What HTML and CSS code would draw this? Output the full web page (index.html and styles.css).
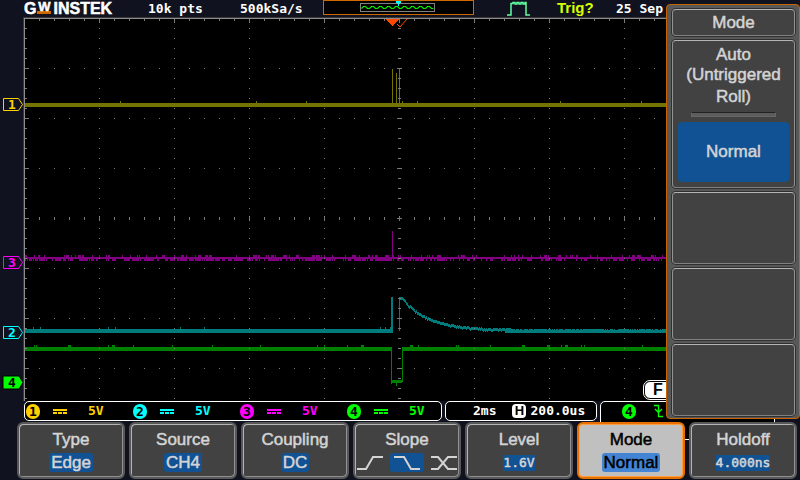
FILE: index.html
```
<!DOCTYPE html>
<html lang="en">
<head>
<meta charset="utf-8">
<title>GW Instek oscilloscope</title>
<link rel="stylesheet" href="styles.css">
</head>
<body>
<header class="topbar">
  <div class="logo"><span>G</span><span class="logo-w">W</span><span>INSTEK</span></div>
  <span class="mono">10k pts</span>
  <span class="mono">500kSa/s</span>
  <svg class="record" width="151" height="16" viewBox="0 0 151 16" aria-hidden="true">
    <rect x=".5" y=".5" width="150" height="14" fill="#000" stroke="#cf6800"/>
    <rect x="37.5" y="3.5" width="74" height="8" fill="none" stroke="#808080"/>
    <path d="M38.500 8.500l2-2h2l2 2h2l2-2h2l2 2h2l2-2h2l2 2h2l2-2h2l2 2h2l2-2h2l2 2h2l2-2h2l2 2h2l2-2h2l2 2h2l2-2h2l2 2h2l2-2h2l2 2h2" fill="none" stroke="#00f000" stroke-width="1.2"/>
    <path d="M73 1h5v2h-1v1h-1v2h-1v-2h-1v-1h-1z" fill="#0ff"/>
  </svg>
  <svg width="24" height="16" viewBox="0 0 24 16" aria-hidden="true">
    <path d="M0 15h4V3.500h2V2.500h2v1.500h2V2.500h2v1.500h2V2.500h2v1.500h2V2.500h1V15h4" fill="none" stroke="#60ffa0" stroke-width="1.500"/>
  </svg>
  <span class="trig">Trig?</span>
  <span class="mono">25 Sep</span>
</header>

<main class="scope">
  <svg class="gutter" width="23" height="384" viewBox="0 17 23 384">
    <g fill="none">
      <path d="M3.500 98.500h15l4 6l-4 6h-15z" stroke="#ffd000"/>
      <path d="M3.500 256.500h15l4 6l-4 6h-15z" stroke="#f0f"/>
      <path d="M3.500 326.500h15l4 6l-4 6h-15z" stroke="#0ff"/>
      <path d="M3 376h16l4 6.500l-4 6.500h-16z" stroke="#000" fill="#0f0"/>
    </g>
    <g class="marker-text">
      <text x="12" y="109" fill="#ffd000">1</text>
      <text x="12" y="267" fill="#f0f">3</text>
      <text x="12" y="337" fill="#0ff">2</text>
      <text x="12" y="387" fill="#000">4</text>
    </g>
  </svg>
  <div class="screen">
    <svg class="plot" viewBox="25 19 775 382" preserveAspectRatio="xMinYMin slice" shape-rendering="crispEdges" aria-label="Waveforms">
      <path id="ch1" fill="#747400"/>
      <path id="ch3" fill="#820082"/>
      <path id="ch2" fill="#007c7c"/>
      <path id="ch4" fill="#008000"/>
      <path id="grid" fill="#7b7b7b"/>
      <path d="M386 19h13l-6.500 7z" fill="#ff4800"/>
      <path d="M397 24l3 3l7-8" fill="none" stroke="#ff4800" shape-rendering="auto"/>
    </svg>
    <span class="force">F</span>
  </div>
</main>

<section class="status">
  <div class="pill channels">
    <div class="channel yellow"><b class="dot">1</b><i class="dc"></i><span class="mono">5V</span></div>
    <div class="channel cyan"><b class="dot">2</b><i class="dc"></i><span class="mono">5V</span></div>
    <div class="channel magenta"><b class="dot">3</b><i class="dc"></i><span class="mono">5V</span></div>
    <div class="channel green"><b class="dot">4</b><i class="dc"></i><span class="mono">5V</span></div>
  </div>
  <div class="pill timebase">
    <span class="mono">2ms</span><b class="h-badge">H</b><span class="mono">200.0us</span>
  </div>
  <div class="pill trigger green">
    <b class="dot">4</b>
    <svg width="10" height="14" viewBox="0 0 10 14" aria-hidden="true"><path d="M0 1.500h4.500v11H9M1 5l3.500 3.500L8 5" fill="none" stroke="#0f0" stroke-width="1.300"/></svg>
  </div>
</section>

<nav class="softkeys">
  <button class="key"><span>Type</span><span class="value">Edge</span></button>
  <button class="key"><span>Source</span><span class="value">CH4</span></button>
  <button class="key"><span>Coupling</span><span class="value">DC</span></button>
  <button class="key"><span>Slope</span>
    <span class="slopes">
      <svg width="28" height="19" viewBox="0 0 28 19"><path d="M1 16h9l7-12h10"/></svg>
      <svg class="chosen" width="34" height="19" viewBox="0 0 34 19"><path d="M4 4h10l7 12h9"/></svg>
      <svg width="28" height="19" viewBox="0 0 28 19"><path d="M1 4h7l10 12h9M1 16h7l10-12h9"/></svg>
    </span>
  </button>
  <button class="key"><span>Level</span><span class="value number mono">1.6V</span></button>
  <button class="key active"><span>Mode</span><span class="value">Normal</span></button>
  <button class="key"><span>Holdoff</span><span class="value number mono">4.000ns</span></button>
</nav>

<aside class="panel">
  <h2 class="tile title">Mode</h2>
  <div class="tile modes">
    <button class="mode">Auto<br>(Untriggered<span class="roll">Roll)</span></button>
    <hr>
    <button class="mode selected">Normal</button>
  </div>
  <button class="tile" aria-label="Unused key"></button>
  <button class="tile" aria-label="Unused key"></button>
  <button class="tile" aria-label="Unused key"></button>
</aside>
<script src="scope.js"></script>
</body>
</html>
```
FILE: styles.css
```
* { box-sizing: border-box; }

body {
  margin: 0;
  min-height: 100vh;
  display: flex;
  flex-direction: column;
  position: relative;
  overflow: hidden;
  background: #10131f;
  color: #fff;
  font-family: "Liberation Sans", Arial, sans-serif;
}

button {
  margin: 0;
  padding: 0;
  border: 0;
  background: none;
  color: inherit;
  font: inherit;
}

.mono {
  font: bold 13px/16px "DejaVu Sans Mono", monospace;
  white-space: pre;
}

.yellow { color: #ffd000; }
.cyan { color: #0ff; }
.magenta { color: #f0f; }
.green { color: #0f0; }

.topbar {
  display: grid;
  grid-template-columns: 124px 92px 83px 184px 50px 59px 1fr;
  height: 17px;
  padding-left: 24px;
}

.topbar .mono { line-height: 18px; }

.logo {
  display: flex;
  font: bold 16px/17px "Liberation Sans", Arial, sans-serif;
  -webkit-text-stroke: 0.5px;
}

.logo-w {
  width: 14px;
  height: 14px;
  margin: 0 2px 0 1px;
  border-bottom: 3px solid #cf6800;
  font-size: 13px;
  line-height: 13px;
  text-align: center;
}

.trig {
  color: #d8ff00;
  font: bold 15px/16px "Liberation Sans", Arial, sans-serif;
}

.scope {
  flex: 1;
  display: flex;
}

.marker-text {
  font: bold 13px "DejaVu Sans Mono", monospace;
  text-anchor: middle;
}

.screen {
  flex: 1;
  position: relative;
  background: #000;
  border-top: 2px groove #8c8c8c;
  border-left: 2px groove #8c8c8c;
}

.plot {
  display: block;
  width: 100%;
}

.force {
  position: absolute;
  right: 122px;
  bottom: 2px;
  width: 34px;
  height: 18px;
  padding-left: 8px;
  border: 1px solid #000;
  border-radius: 6px;
  outline: 1px solid #fff;
  background: #fff;
  color: #000;
  font: bold 16px/16px "Liberation Sans", Arial, sans-serif;
}

.status {
  display: flex;
  gap: 3px;
  height: 21px;
  padding-left: 24px;
}

.pill {
  display: flex;
  align-items: center;
  height: 20px;
  border: 1px solid #fff;
  border-radius: 5px;
  background: #000;
}

.channels { width: 418px; padding-left: 1px; }

.channel {
  display: flex;
  flex-shrink: 0;
  align-items: center;
  width: 107px;
}

.channel:last-child { flex-shrink: 1; }

.dot {
  width: 14px;
  height: 15px;
  border-radius: 7px;
  background: currentColor;
  font: bold 13px/15px "DejaVu Sans Mono", monospace;
  text-align: center;
}

.dot::first-letter { color: #000; }

.dc {
  width: 14px;
  height: 5px;
  margin: 0 21px 0 13px;
  border-top: 2px solid;
  background: repeating-linear-gradient(90deg, currentColor 0 4px, transparent 4px 5px) 0 1px / 14px 2px no-repeat;
}

.timebase { width: 152px; padding-left: 27px; }

.h-badge {
  width: 14px;
  height: 14px;
  margin: 0 4px 0 16px;
  border-radius: 4px;
  background: #fff;
  color: #000;
  font-size: 13px;
  line-height: 14px;
  text-align: center;
}

.trigger {
  width: 175px;
  height: 39px;
  padding: 2px 0 0 21px;
  align-items: flex-start;
  gap: 18px;
}

.softkeys {
  position: relative;
  display: grid;
  grid-template-columns: repeat(7, 1fr);
  gap: 4px;
  padding: 0 3px 1px 17px;
}

.key {
  height: 57px;
  border: 2px solid #585858;
  border-radius: 6px;
  box-shadow: inset 1px 1px #b4b4b4, inset -1px -1px #909090;
  background: #424242;
  color: #d4d4d4;
  display: flex;
  flex-direction: column;
  align-items: center;
  padding-top: 6px;
  font-size: 17px;
  line-height: 20px;
  -webkit-text-stroke: 0.5px;
}

.value {
  margin-top: 3px;
  padding: 0 2px;
  border-radius: 3px;
  background: #105294;
  line-height: 19px;
}

.value.number {
  margin-top: 5px;
  padding: 0;
  border-radius: 0;
  font-weight: normal;
  line-height: 16px;
}

.key.active {
  border-color: #e87000;
  box-shadow: inset 0 0 0 1px #ffa040;
  background: #c0c0c0;
  color: #000;
}

.key.active .value { background: #4484d4; }

.slopes {
  display: flex;
  gap: 6px;
  margin-top: 3px;
}

.slopes path { fill: none; stroke: #d4d4d4; stroke-width: 2; }

.chosen { border-radius: 3px; background: #105294; }

.panel {
  position: absolute;
  top: 4px;
  right: 0;
  width: 134px;
  display: flex;
  flex-direction: column;
  gap: 4px;
  padding: 4px 4px 2px 5px;
  border: 1px solid #c86400;
  border-radius: 4px;
  background: #585858;
  color: #d4d4d4;
  font-size: 17px;
  line-height: 20px;
  -webkit-text-stroke: 0.5px;
}

.tile {
  min-height: 72px;
  margin: 0;
  border: 1px solid;
  border-color: #b4b4b4 #929292 #808080;
  border-radius: 4px;
  box-shadow: 0 0 0 1px #303030;
  background: #424242;
}

.title {
  min-height: 27px;
  font-size: 17px;
  font-weight: normal;
  line-height: 25px;
  text-align: center;
}

.modes {
  display: flex;
  flex-direction: column;
  padding: 4px 5px 5px;
}

.mode { display: block; }

.roll { display: block; margin-top: 2px; }

.modes hr {
  width: 85px;
  height: 5px;
  margin: 5px auto;
  border: 1px solid #666;
  border-top-color: #222;
  background: #5c5c5c;
}

.selected {
  height: 60px;
  border-radius: 4px;
  background: #105294;
}
```
FILE: scope.js
```
const rect = (x, y, w, h) => `M${x} ${y}h${w}v${h}h${-w}z`;

function random(seed) {
  return () => (seed = (seed * 16807) % 2147483647) / 2147483647;
}

// Noise blips above and below a flat trace, skipping one span.
function noise(seed, top, bottom, up, down, skipFrom, skipTo) {
  const next = random(seed);
  let d = "";
  for (let x = 25; x < 798; x += 1) {
    if (x >= skipFrom && x < skipTo) continue;
    const w = next() > 0.75 ? 3 : 1;
    if (next() < up) d += rect(x, top - 2, w, 2);
    if (next() < down) d += rect(x, bottom, w, 2);
  }
  return d;
}

const draw = (id, d) => document.getElementById(id).setAttribute("d", d);

// Channel 1
let d = rect(25, 103, 775, 4) + rect(392, 69, 1, 34) + rect(396, 73, 1, 30) + rect(399, 69, 1, 34);
for (const x of [120, 256, 306, 402, 417, 560, 641]) d += rect(x, 101, 1, 2);
draw("ch1", d);

// Channel 3
draw("ch3", rect(25, 257, 775, 2) + rect(392, 231, 1, 27) + noise(77, 257, 259, 0.14, 0.4, 0, 0));

// Channel 2: pulse, then exponential decay
d = rect(25, 329, 368, 4) + rect(391, 297, 2, 34) + rect(399, 298, 1, 33);
const next = random(31);
for (let x = 399; x < 800; x += 1) {
  const decay = 32 * Math.exp(-Math.max(0, x - 402) / 26);
  d += rect(x, Math.round(329 - decay + (next() > 0.8 ? 1 : 0)), 1, 3);
}
draw("ch2", d + rect(505, 330, 295, 3) + noise(19, 329, 332, 0.015, 0, 391, 505));

// Channel 4: low pulse
d = rect(25, 347, 367, 4) + rect(391, 347, 1, 37) + rect(392, 380, 10, 3) + rect(402, 347, 1, 35);
d += rect(396, 383, 1, 3) + rect(403, 347, 397, 4);
draw("ch4", d + noise(53, 347, 351, 0.05, 0, 388, 406));

// Graticule
d = "";
for (let x = 39; x < 800; x += 15) {
  const major = (x - 24) % 75 === 0;
  d += rect(x, 19, 1, major ? 4 : 2) + rect(x, major ? 216 : 217, 1, major ? 5 : 3);
  for (let y = 68; y < 400; y += 50) if (y !== 218) d += rect(x, y, 1, 1);
  if (major) for (let y = 28; y < 400; y += 10) d += rect(x, y, 1, 1);
}
for (let y = 28; y < 400; y += 10) {
  const major = (y - 18) % 50 === 0;
  d += rect(25, y, major ? 4 : 2, 1) + rect(major ? 397 : 398, y, major ? 5 : 3, 1);
}
draw("grid", d);
```
